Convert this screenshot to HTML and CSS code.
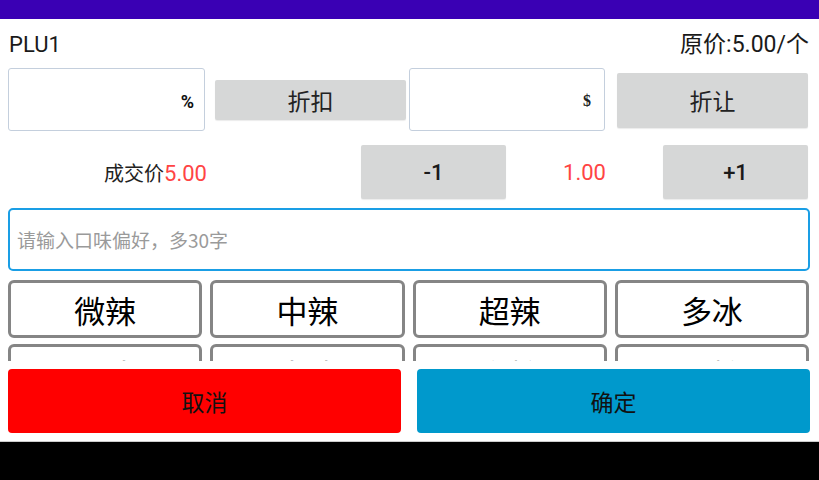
FILE: index.html
```html
<!DOCTYPE html>
<html lang="zh">
<head>
<meta charset="utf-8">
<link rel="stylesheet" href="styles.css">
</head>
<body>
<div class="screen">
  <div class="statusbar"></div>
  <div class="content">
    <div class="header">
      <span class="plu">PLU1</span>
      <span class="orig">原价:5.00/个</span>
    </div>
    <div class="discount-row">
      <div class="field field-pct"><span class="unit">%</span></div>
      <div class="btn btn-small">折扣</div>
      <div class="field field-amt"><span class="unit unit-dollar">$</span></div>
      <div class="btn btn-tall">折让</div>
    </div>
    <div class="qty-row">
      <div class="deal"><span class="deal-label">成交价</span><span class="red deal-val">5.00</span></div>
      <div class="btn qbtn">-1</div>
      <div class="qty red">1.00</div>
      <div class="btn qbtn">+1</div>
    </div>
    <div class="remark"><span class="placeholder">请输入口味偏好，多30字</span></div>
    <div class="tags">
      <div class="tag">微辣</div>
      <div class="tag">中辣</div>
      <div class="tag">超辣</div>
      <div class="tag">多冰</div>
      <div class="tag">少冰</div>
      <div class="tag">去冰</div>
      <div class="tag">多糖</div>
      <div class="tag">少糖</div>
    </div>
    <div class="actions">
      <div class="action cancel">取消</div>
      <div class="action ok">确定</div>
    </div>
  </div>
  <div class="navbar"></div>
</div>
</body>
</html>
```
FILE: styles.css
```css
* { box-sizing: border-box; }
html, body { margin: 0; padding: 0; }
body {
  width: 819px;
  height: 480px;
  overflow: hidden;
  background: #fff;
  font-family: Roboto, "Noto Sans", "Noto Sans CJK SC", sans-serif;
  color: #1a1a1a;
}
.screen {
  display: flex;
  flex-direction: column;
  height: 480px;
}
.statusbar {
  height: 19px;
  background: #3a00b4;
  flex: none;
}
.content {
  flex: 1;
  padding: 0 9px 0 8px;
  display: flex;
  flex-direction: column;
}
.header {
  display: flex;
  justify-content: space-between;
  align-items: center;
  padding-top: 13px;
  height: 38px;
  font-size: 22px;
  line-height: 26px;
}
.plu { padding-left: 1px; }
.orig { font-family: Roboto, "Noto Sans CJK SC", sans-serif; font-size: 23px; padding-right: 1px; }
.discount-row {
  margin-top: 11px;
  height: 63px;
  display: flex;
  align-items: center;
}
.field {
  height: 63px;
  border: 1px solid #c4cfdd;
  border-radius: 3px;
  display: flex;
  align-items: center;
  justify-content: flex-end;
  padding-right: 10px;
}
.field-pct { width: 197px; }
.field-amt { width: 196px; margin-left: 3px; padding-right: 13px; }
.unit { font-size: 18px; font-weight: bold; color: #111; padding-top: 3px; }
.unit-dollar { font-family: "Liberation Serif", serif; font-size: 16px; color: #222; }
.btn {
  background: #d6d7d7;
  display: flex;
  align-items: center;
  justify-content: center;
  border-radius: 2px;
  box-shadow: 0 1px 1px rgba(0,0,0,0.08);
  font-family: "Noto Sans CJK SC", sans-serif;
  font-size: 23px;
  color: #222;
}
.btn-small { width: 191px; height: 40px; margin-left: 10px; }
.btn-tall { width: 191px; height: 55px; margin-left: 12px; margin-top: 1px; }
.qty-row {
  margin-top: 14px;
  height: 54px;
  display: flex;
  align-items: center;
}
.deal {
  width: 353px;
  display: flex;
  justify-content: center;
  align-items: baseline;
  padding-right: 58px;
}
.deal-label { font-family: "Noto Sans CJK SC", sans-serif; font-size: 20px; color: #222; }
.deal-val { font-size: 22px; }
.red { color: #ff4444; }
.qbtn { width: 145px; height: 54px; font-family: Roboto, sans-serif; font-size: 22px; font-weight: 500; color: #1a1a1a; }
.qty { width: 157px; text-align: center; font-size: 22px; }
.remark {
  margin-top: 9px;
  height: 63px;
  border: 2px solid #1a9ee5;
  border-radius: 5px;
  display: flex;
  align-items: center;
  padding-left: 7px;
}
.placeholder { font-family: "Noto Sans CJK SC", sans-serif; font-size: 19px; color: #9a9a9a; }
.tags {
  margin-top: 9px;
  height: 81px;
  overflow: hidden;
  display: grid;
  grid-template-columns: repeat(4, 1fr);
  grid-auto-rows: 58px;
  column-gap: 8px;
  row-gap: 6px;
  padding-right: 1px;
}
.tag {
  border: 3px solid #858585;
  border-radius: 6px;
  display: flex;
  align-items: center;
  justify-content: center;
  font-family: "Noto Sans CJK SC", sans-serif;
  font-size: 31px;
  color: #000;
}
.actions {
  margin-top: 8px;
  height: 64px;
  display: flex;
  gap: 16px;
}
.action {
  flex: 1;
  border-radius: 4px;
  display: flex;
  align-items: center;
  justify-content: center;
  font-family: "Noto Sans CJK SC", sans-serif;
  font-size: 23px;
  color: #111;
}
.cancel { background: #ff0000; }
.ok { background: #0099cc; }
.navbar {
  height: 39px;
  flex: none;
  background: #000;
  border-top: 1px solid #ccc;
  margin-top: 8px;
}
```
